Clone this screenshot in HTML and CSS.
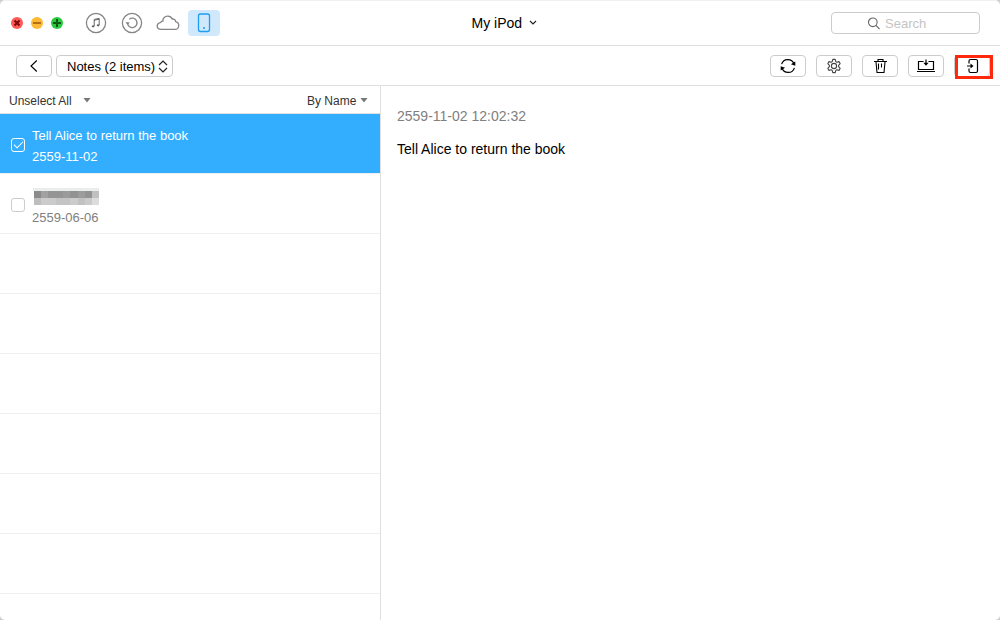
FILE: index.html
```html
<!DOCTYPE html>
<html lang="en">
<head>
<meta charset="utf-8">
<meta name="viewport" content="width=device-width, initial-scale=1">
<title>My iPod</title>
<link rel="stylesheet" href="styles.css">
</head>
<body>
<div class="window">
	<header class="titlebar">
		<div class="left">
			<div class="lights">
				<button type="button" class="light red" aria-label="Close"><svg width="12" height="12" viewBox="0 0 12 12"><path d="M3.5 3.5l5 5M8.5 3.5l-5 5" stroke="#7e0508" stroke-width="2"/></svg></button>
				<button type="button" class="light yellow" aria-label="Minimize"><svg width="12" height="12" viewBox="0 0 12 12"><path d="M2 6h8" stroke="#985712" stroke-width="1.6"/></svg></button>
				<button type="button" class="light green" aria-label="Zoom"><svg width="12" height="12" viewBox="0 0 12 12"><path d="M2 6h8M6 2v8" stroke="#0b5a12" stroke-width="2"/></svg></button>
			</div>
			<nav class="modes">
				<button type="button" class="mode" aria-label="Music"><svg width="24" height="24" viewBox="0 0 24 24" fill="none" stroke="#858585"><circle cx="12" cy="12" r="9.6" stroke-width="1.3"/><path d="M10.2 15.2V8.4l5-1v6.8M10.2 9.2l5-1" stroke="#666"/><ellipse cx="9.1" cy="15.3" rx="1.4" ry="1.1" fill="#666" stroke="none"/><ellipse cx="14.1" cy="14.3" rx="1.4" ry="1.1" fill="#666" stroke="none"/></svg></button>
				<button type="button" class="mode" aria-label="Backups"><svg width="24" height="24" viewBox="0 0 24 24" fill="none" stroke="#858585" stroke-width="1.3"><circle cx="12" cy="12" r="9.6"/><path d="M7.6 12.2a4.7 4.7 0 1 0 1.7-4"/><path d="M5.4 11.2l2.2 2.6 2.2-2.4z" fill="#777" stroke="none"/></svg></button>
				<button type="button" class="mode" aria-label="iCloud"><svg width="24" height="24" viewBox="0 0 24 24" fill="none" stroke="#858585" stroke-width="1.3"><path d="M5.2 18.4h13.6a3.9 3.9 0 0 0 .9-7.7c-.2-1.9-1.8-3-3.5-2.6-.9-2-2.7-3-4.6-2.9-2.9.1-5 2.3-4.8 5-.9-.2-1.7.2-2 1.1-2 .5-3.6 1.8-3.6 3.7 0 2 1.7 3.4 4 3.4z"/></svg></button>
				<button type="button" class="mode active" aria-label="Device"><svg width="24" height="24" viewBox="0 0 24 24" fill="none" stroke="#1b9df0" stroke-width="1.3"><rect x="6.500" y="3" width="11" height="17.500" rx="2"/><circle cx="12" cy="17" r="1" fill="#1b9df0" stroke="none"/></svg></button>
			</nav>
		</div>
		<div class="device">
			<select aria-label="Device name"><option>My iPod</option></select>
			<svg width="8" height="6" viewBox="0 0 8 6" fill="none" stroke="#222" stroke-width="1.2"><path d="M1 1l3 3 3-3"/></svg>
		</div>
		<label class="search">
			<svg width="14" height="14" viewBox="0 0 14 14" fill="none" stroke="#666" stroke-width="1.1"><circle cx="5.800" cy="6.300" r="4.300"/><path d="M8.900 9.400l3.600 3.600"/></svg>
			<input type="text" placeholder="Search" aria-label="Search">
		</label>
	</header>

	<div class="toolbar">
		<button type="button" class="btn" aria-label="Back"><svg width="16" height="16" viewBox="0 0 16 16" fill="none" stroke="#000" stroke-width="1.1"><path d="M10.8 2.5L5 8l5.8 5.500"/></svg></button>
		<div class="category">
			<select aria-label="Category"><option>Notes (2 items)</option></select>
			<svg width="10" height="14" viewBox="0 0 10 14" fill="none" stroke="#222" stroke-width="1.2"><path d="M1 6l4-4 4 4M1 9l4 4 4-4"/></svg>
		</div>
		<div class="actions">
			<button type="button" class="btn" aria-label="Refresh"><svg width="16" height="16" viewBox="0 0 16 16" fill="none" stroke="#000" stroke-width="1.2"><path d="M1.6 6.2A6.5 6.5 0 0 1 14 6M14.4 9.8A6.5 6.5 0 0 1 2 10"/><path d="M15.3 3.6v4.2l-4.4-1.5zM.7 12.4V8.2l4.4 1.5z" fill="#000" stroke="none"/></svg></button>
			<button type="button" class="btn" aria-label="Settings"><svg width="16" height="16" viewBox="0 0 16 16" fill="none" stroke="#444" stroke-width="1.1" stroke-linejoin="round"><path d="M6.8 1.4h2.4l.6 2.200 1 .6 2.200-.6 1.200 2.100L12.600 7.300v1.400l1.600 1.600-1.200 2.100-2.200-.6-1 .6-.6 2.200H6.800l-.6-2.200-1-.6-2.200.6-1.200-2.100L3.400 8.700V7.300L1.800 5.700 3 3.600l2.200.6 1-.6z"/><circle cx="8" cy="8" r="2.600"/></svg></button>
			<button type="button" class="btn" aria-label="Delete"><svg width="16" height="16" viewBox="0 0 16 16" fill="none" stroke="#000" stroke-width="1.1"><path d="M2 3.500h13M6 3V1.500h5V3M4 4l1 10.500h7L13 4M6.500 5.500v6M9.500 5.500v4"/></svg></button>
			<button type="button" class="btn" aria-label="To Mac"><svg width="18" height="16" viewBox="0 0 18 16" fill="none" stroke="#000" stroke-width="1.2"><path d="M6.500 3.500h-5v8h15v-8h-5M0 13.500h18M9 1.500v5"/><path d="M6.400 4.800h5.200L9 7.800z" fill="#000" stroke="none"/></svg></button>
			<button type="button" class="btn marked" aria-label="To Device"><svg width="16" height="16" viewBox="0 0 16 16" fill="none" stroke="#000" stroke-width="1.2"><path d="M5 5.500V3a1.500 1.500 0 0 1 1.500-1.500h5.500A1.500 1.500 0 0 1 13.500 3v10a1.500 1.500 0 0 1-1.500 1.500H6.500A1.500 1.500 0 0 1 5 13v-2.500M3 8h5"/><path d="M6.500 5.500v5L9.500 8z" fill="#000" stroke="none"/></svg></button>
		</div>
	</div>

	<div class="content">
		<section class="sidebar">
			<div class="list-head">
				<div class="pick all">
					<select aria-label="Selection"><option>Unselect All</option></select>
					<svg width="8" height="5" viewBox="0 0 8 5"><path d="M.5 0h7L4 4.500z" fill="#777"/></svg>
				</div>
				<div class="pick">
					<select aria-label="Sort"><option>By Name</option></select>
					<svg width="8" height="5" viewBox="0 0 8 5"><path d="M.5 0h7L4 4.500z" fill="#777"/></svg>
				</div>
			</div>
			<ul class="notes">
				<li class="selected">
					<input type="checkbox" id="note1" checked>
					<label for="note1"><span>Tell Alice to return the book</span><span class="date">2559-11-02</span></label>
				</li>
				<li>
					<input type="checkbox" id="note2">
					<label for="note2">
						<svg class="mosaic" width="68" height="17" viewBox="0 0 68 17" shape-rendering="crispEdges" role="img" aria-label="Hidden title">
							<path fill="#e9edec" d="M1 0h66v3H1z"/>
							<path fill="#8b8b8b" d="M2 3h7v7H2z"/>
							<path fill="#a1a1a1" d="M9 3h7v7H9z"/>
							<path fill="#959595" d="M16 3h15v7H16z"/>
							<path fill="#9b9b9b" d="M31 3h7v7h-7z"/>
							<path fill="#929292" d="M38 3h8v7h-8z"/>
							<path fill="#9c9c9c" d="M46 3h7v7h-7z"/>
							<path fill="#939393" d="M53 3h7v7h-7z"/>
							<path fill="#c0c0c0" d="M60 3h7v7h-7z"/>
							<path fill="#bebebe" d="M2 10h7v7H2z"/>
							<path fill="#cbcbcb" d="M9 10h15v7H9z"/>
							<path fill="#c4c4c4" d="M24 10h14v7H24z"/>
							<path fill="#cccccc" d="M38 10h8v7h-8z"/>
							<path fill="#c1c1c1" d="M46 10h7v7h-7z"/>
							<path fill="#cacaca" d="M53 10h7v7h-7z"/>
							<path fill="#dcdcdc" d="M60 10h7v7h-7z"/>
						</svg>
						<span class="date">2559-06-06</span>
					</label>
				</li>
				<li></li>
				<li></li>
				<li></li>
				<li></li>
				<li></li>
				<li></li>
				<li></li>
			</ul>
		</section>
		<article class="detail">
			<p class="time">2559-11-02 12:02:32</p>
			<p>Tell Alice to return the book</p>
		</article>
	</div>
</div>
</body>
</html>
```
FILE: styles.css
```css
* {box-sizing:border-box;}
body, p, ul, input, select, button {margin:0; padding:0;}
body {background:#ccc; font-family:"Liberation Sans", Arial, sans-serif; font-size:13px; color:#000;}
li {list-style:none;}
svg {display:block; flex:none;}
button {border:0; background:none; font:inherit; cursor:pointer;}
select {appearance:none; border:0; background:none; font:inherit; color:inherit; cursor:pointer;}

.window {display:flex; flex-direction:column; height:100vh; overflow:hidden; background:#fff; border-top:1px solid #f0f0f0; border-radius:5px;}

/* title bar */
.titlebar {display:grid; grid-template-columns:1fr auto 1fr; align-items:center; height:45px; flex:none; border-bottom:1px solid #e0e0e0;}
.left {display:flex; align-items:center; gap:17px; padding-left:11px;}
.lights {display:flex; gap:8px;}
.light {width:12px; height:12px; border-radius:50%;}
.red {background:#fc5b57;}
.yellow {background:#fdb933;}
.green {background:#2ac940;}
.modes {display:flex; gap:4px;}
.mode {display:flex; align-items:center; justify-content:center; width:32px; height:26px; border-radius:4px;}
.mode.active {background:#d0e8fc;}
.device {display:flex; align-items:center; gap:6px; padding-left:8px; font-size:14px;}
.search {display:flex; align-items:center; justify-self:end; gap:4px; width:149px; height:22px; margin-right:20px; padding-left:35px; border:1px solid #ccc; border-radius:4px;}
.search input {width:100%; min-width:0; border:0; outline:0; background:none; font:inherit;}
.search input::placeholder {color:#c4c4c4;}

/* toolbar */
.toolbar {display:flex; align-items:center; gap:4px; height:40px; flex:none; padding:0 10px 0 16px; border-bottom:1px solid #e0e0e0;}
.btn {display:flex; align-items:center; justify-content:center; width:36px; height:22px; border:1px solid #ccc; border-radius:4px;}
.category {display:flex; align-items:center; gap:2px; height:22px; padding:1px 4px 0 10px; border:1px solid #ccc; border-radius:4px;}
.actions {display:flex; gap:10px; margin-left:auto;}
.marked {position:relative;}
.marked:after {content:""; box-sizing:border-box; position:absolute; top:-1px; left:0; width:38px; height:24px; border:3px solid #ff2a0d;}

.content {display:flex; flex:1; min-height:0;}

/* note list */
.sidebar {width:381px; flex:none; overflow:hidden; border-right:1px solid #e0e0e0;}
.list-head {display:flex; align-items:center; justify-content:space-between; height:28px; padding:2px 12px 0 9px; border-bottom:1px solid #e0e0e0; font-size:12px; color:#333;}
.pick {display:flex; align-items:center; gap:3px;}
.all {gap:10px;}
.notes li {display:flex; align-items:center; gap:7px; height:60px; padding:2px 11px 0; border-bottom:1px solid #f0f0f0;}
.notes label {display:flex; flex-direction:column; gap:5px; padding-top:4px; line-height:16px;}
.notes input {appearance:none; width:14px; height:14px; flex:none; border:1px solid #ccc; border-radius:3px; background:#fff;}
.notes input:checked {display:flex; align-items:center; justify-content:center; border-color:#fff; background:none;}
.notes input:checked:after {content:""; width:8px; height:4px; border:solid #fff; border-width:0 0 1px 1px; transform:translateY(-1px) rotate(-45deg);}
.notes .date {color:#808080;}
.notes .selected {background:#33aefe; color:#fff;}
.notes .selected .date {color:#fff;}

/* note text */
.detail {flex:1; padding:22px 16px; font-size:14px; line-height:16px;}
.detail p {margin-bottom:17px;}
.detail .time {color:#808080;}
```
